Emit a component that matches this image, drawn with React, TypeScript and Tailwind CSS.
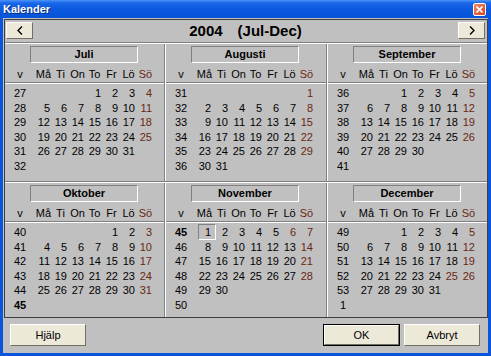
import React from "react";

type Month = {
  name: string;
  offset: number;
  days: number;
  weeks: number[];
  holidays?: number[];
  boldWeekIdx?: number;
  selected?: number;
};

const row1: Month[] = [
  { name: "Juli", offset: 3, days: 31, weeks: [27, 28, 29, 30, 31, 32] },
  { name: "Augusti", offset: 6, days: 31, weeks: [31, 32, 33, 34, 35, 36] },
  { name: "September", offset: 2, days: 30, weeks: [36, 37, 38, 39, 40, 41] },
];
const row2: Month[] = [
  { name: "Oktober", offset: 4, days: 31, weeks: [40, 41, 42, 43, 44, 45], boldWeekIdx: 5 },
  { name: "November", offset: 0, days: 30, weeks: [45, 46, 47, 48, 49, 50], holidays: [6], boldWeekIdx: 0, selected: 1 },
  { name: "December", offset: 2, days: 31, weeks: [49, 50, 51, 52, 53, 1], holidays: [25] },
];

const dayNames = ["Må", "Ti", "On", "To", "Fr", "Lö", "Sö"];
const RED = "text-[#6a2812]";

function Panel({ m, w }: { m: Month; w: string }) {
  const rows: (number | null)[][] = [];
  for (let r = 0; r < 6; r++) {
    const cells: (number | null)[] = [];
    for (let c = 0; c < 7; c++) {
      const d = r * 7 + c - m.offset + 1;
      cells.push(d >= 1 && d <= m.days ? d : null);
    }
    rows.push(cells);
  }
  return (
    <div className={`${w} flex flex-col pt-[2px]`}>
      <div className="ml-[25px] w-[108px] h-[17px] border border-t-[#808080] border-l-[#808080] border-b-white border-r-white text-center font-bold text-[11px] leading-[15px] text-black">
        {m.name}
      </div>
      <div className="mt-[4px] h-[14px] grid grid-cols-[30px_repeat(7,17px)] items-center text-[11px] leading-[14px] text-black">
        <div className="text-center">v</div>
        {dayNames.map((d, i) => (
          <div key={d} className={`text-center ${i === 6 ? RED : ""}`}>
            {d}
          </div>
        ))}
      </div>
      <div className="mt-[1px] h-[2px] border-t border-b border-t-[#808080] border-b-white" />
      <div className="mt-[2px] flex flex-col">
        {rows.map((cells, r) => (
          <div key={r} className="h-[14.5px] grid grid-cols-[30px_repeat(7,17px)] items-center text-[11px] leading-[14px] text-black">
            <div className={`text-center ${m.boldWeekIdx === r ? "font-bold" : ""}`}>{m.weeks[r]}</div>
            {cells.map((d, c) => {
              const red = d !== null && (c === 6 || (m.holidays || []).includes(d));
              const sel = d !== null && m.selected === d;
              return (
                <div key={c} className={`relative text-right pr-[2px] ${red ? RED : ""}`}>
                  {sel && (
                    <span className="absolute left-[2px] right-[-3px] top-[-1px] bottom-[-1px] border border-t-[#808080] border-l-[#808080] border-b-white border-r-white" />
                  )}
                  <span className="relative">{d ?? ""}</span>
                </div>
              );
            })}
          </div>
        ))}
      </div>
    </div>
  );
}

function VSep() {
  return <div className="w-[2px] border-l border-r border-l-[#808080] border-r-white" />;
}

function HSep() {
  return <div className="h-[2px] border-t border-b border-t-[#808080] border-b-white" />;
}

function Btn({ children, w, def }: { children: React.ReactNode; w: string; def?: boolean }) {
  return (
    <div className={`${w} h-[22px] ${def ? "border border-black" : ""}`}>
      <div className="w-full h-full bg-[#ece9d8] border border-t-white border-l-white border-b-[#716f64] border-r-[#716f64] flex items-center justify-center text-[11px] text-black">
        {children}
      </div>
    </div>
  );
}

function ArrowBtn({ dir }: { dir: "l" | "r" }) {
  return (
    <div className="w-[27px] h-[17px] bg-[#ece9d8] border border-t-white border-l-white border-b-[#716f64] border-r-[#716f64] flex items-center justify-center">
      <svg width="6" height="9" viewBox="0 0 6 9">
        {dir === "l" ? (
          <path d="M5 0.5 L1 4.5 L5 8.5" stroke="#000" strokeWidth="1.4" fill="none" />
        ) : (
          <path d="M1 0.5 L5 4.5 L1 8.5" stroke="#000" strokeWidth="1.4" fill="none" />
        )}
      </svg>
    </div>
  );
}

export default function App() {
  return (
    <div
      className="w-[491px] h-[356px] bg-[#0a55dc] flex flex-col overflow-hidden"
      style={{ fontFamily: '"Liberation Sans", Arial, sans-serif' }}
    >
      <div className="h-[18px] flex items-center justify-between pl-[3px] pr-[5px] bg-[linear-gradient(to_bottom,#4a95f8_0px,#1a66e8_3px,#0a5ae0_9px,#0854d8_100%)]">
        <span className="text-white font-bold text-[11px] leading-[14px] [text-shadow:1px_1px_0_#0a2a80]">Kalender</span>
        <div className="w-[13px] h-[13px] rounded-[2px] border border-white bg-[linear-gradient(135deg,#f08a6a,#d8421c)] flex items-center justify-center">
          <svg width="7" height="7" viewBox="0 0 7 7">
            <path d="M0.5 0.5 L6.5 6.5 M6.5 0.5 L0.5 6.5" stroke="#fff" strokeWidth="1.6" />
          </svg>
        </div>
      </div>
      <div className="flex-1 mx-[3px] mb-[3px] bg-[#c0c0c0] flex flex-col pt-[1px]">
        <div className="ml-[1px] w-[484px] h-[299px] border border-[#404040] flex flex-col">
          <div className="h-[22px] flex items-start pt-[2px] pl-[1px] pr-[2px]">
            <ArrowBtn dir="l" />
            <div className="flex-1 flex justify-center items-center h-[17px] text-[15px] font-bold text-black leading-[17px]">
              <span>2004</span>
              <span className="ml-[15px]">(Jul-Dec)</span>
            </div>
            <ArrowBtn dir="r" />
          </div>
          <HSep />
          <div className="flex h-[137px]">
            <Panel m={row1[0]} w="w-[159px]" />
            <VSep />
            <Panel m={row1[1]} w="w-[160px]" />
            <VSep />
            <Panel m={row1[2]} w="w-[159px]" />
          </div>
          <HSep />
          <div className="flex flex-1">
            <Panel m={row2[0]} w="w-[159px]" />
            <VSep />
            <Panel m={row2[1]} w="w-[160px]" />
            <VSep />
            <Panel m={row2[2]} w="w-[159px]" />
          </div>
        </div>
        <div className="flex items-start pt-[6px] pl-[7px] pr-[8px]">
          <Btn w="w-[76px]">Hjälp</Btn>
          <div className="flex-1" />
          <Btn w="w-[77px]" def>
            OK
          </Btn>
          <div className="w-[4px]" />
          <Btn w="w-[76px]">Avbryt</Btn>
        </div>
      </div>
    </div>
  );
}
